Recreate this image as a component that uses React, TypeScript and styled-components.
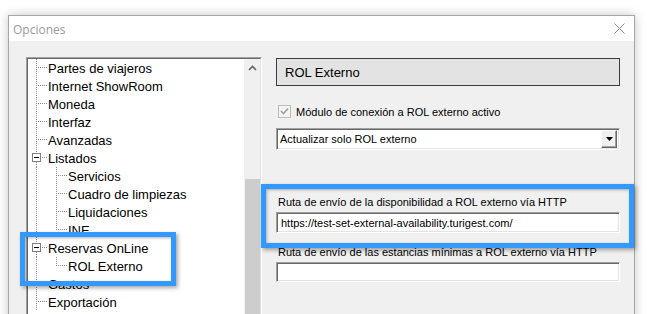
import styled, { createGlobalStyle } from 'styled-components';

const GlobalStyle = createGlobalStyle`
  html, body {
    margin: 0;
    padding: 0;
    background: #ffffff;
    overflow: hidden;
  }
  body {
    font-family: 'Liberation Sans', Arial, sans-serif;
  }
`;

type TreeItem = {
  label: string;
  level: 1 | 2;
  expander?: boolean;
  lastChild?: boolean;
};

const TREE: TreeItem[] = [
  { label: 'Partes de viajeros', level: 1 },
  { label: 'Internet ShowRoom', level: 1 },
  { label: 'Moneda', level: 1 },
  { label: 'Interfaz', level: 1 },
  { label: 'Avanzadas', level: 1 },
  { label: 'Listados', level: 1, expander: true },
  { label: 'Servicios', level: 2 },
  { label: 'Cuadro de limpiezas', level: 2 },
  { label: 'Liquidaciones', level: 2 },
  { label: 'INE', level: 2, lastChild: true },
  { label: 'Reservas OnLine', level: 1, expander: true },
  { label: 'ROL Externo', level: 2, lastChild: true },
  { label: 'Gastos', level: 1 },
  { label: 'Exportación', level: 1 },
];

// Dotted guide lines of the tree, one small drawing per row
function Guides({ item }: { item: TreeItem }) {
  const dot = { stroke: '#8a8a8a', strokeWidth: 1, strokeDasharray: '1 1', shapeRendering: 'crispEdges' as const };
  const width = item.level === 1 ? 20 : 40;
  return (
    <svg width={width} height={18} viewBox={`0 0 ${width} 18`}>
      {item.expander ? (
        <>
          <line x1={8.5} y1={0} x2={8.5} y2={4} {...dot} />
          <line x1={8.5} y1={13} x2={8.5} y2={18} {...dot} />
          <rect x={4.5} y={4.5} width={8} height={8} fill="#fff" stroke="#7f7f7f" shapeRendering="crispEdges" />
          <line x1={6} y1={8.5} x2={11} y2={8.5} stroke="#000" shapeRendering="crispEdges" />
          <line x1={14} y1={8.5} x2={19} y2={8.5} {...dot} />
        </>
      ) : (
        <>
          <line x1={8.5} y1={0} x2={8.5} y2={18} {...dot} />
          {item.level === 1 && <line x1={10} y1={8.5} x2={19} y2={8.5} {...dot} />}
        </>
      )}
      {item.level === 2 && (
        <>
          <line x1={28.5} y1={0} x2={28.5} y2={item.lastChild ? 9 : 18} {...dot} />
          <line x1={30} y1={8.5} x2={39} y2={8.5} {...dot} />
        </>
      )}
    </svg>
  );
}

export default function App() {
  return (
    <Page>
      <GlobalStyle />
      <Window>
        <TitleBar>
          <span>Opciones</span>
          <svg width="11" height="11" viewBox="0 0 11 11">
            <path d="M0.5 0.5 L10.5 10.5 M10.5 0.5 L0.5 10.5" stroke="#8c8c8c" strokeWidth="1" />
          </svg>
        </TitleBar>
        <Body>
          <TreeFrame>
            <TreeInner>
              <TreeList>
                {TREE.map((item, index) => (
                  <TreeRow key={index}>
                    <Guides item={item} />
                    <span>{item.label}</span>
                  </TreeRow>
                ))}
              </TreeList>
              <ScrollBar>
                <ScrollArrow>
                  <svg width="9" height="6" viewBox="0 0 9 6">
                    <path d="M1 5 L4.5 1.5 L8 5" stroke="#606060" strokeWidth="1.6" fill="none" />
                  </svg>
                </ScrollArrow>
                <ScrollThumb />
              </ScrollBar>
            </TreeInner>
          </TreeFrame>

          <Panel>
            <PanelHeader>ROL Externo</PanelHeader>
            <CheckRow>
              <CheckBox>
                <svg width="9" height="9" viewBox="0 0 9 9">
                  <path d="M1 4 L3.5 6.5 L8 1.5" stroke="#a0a0a0" strokeWidth="1.6" fill="none" />
                </svg>
              </CheckBox>
              <span>Módulo de conexión a ROL externo activo</span>
            </CheckRow>
            <Select>
              <span>Actualizar solo ROL externo</span>
              <SelectButton>
                <svg width="7" height="4" viewBox="0 0 7 4">
                  <path d="M0 0 L7 0 L3.5 4 Z" fill="#000" />
                </svg>
              </SelectButton>
            </Select>
            <FieldLabel $top={46}>Ruta de envío de la disponibilidad a ROL externo vía HTTP</FieldLabel>
            <TextInput $height={21}>https://test-set-external-availability.turigest.com/</TextInput>
            <FieldLabel $top={13}>Ruta de envío de las estancias mínimas a ROL externo vía HTTP</FieldLabel>
            <TextInput $height={20} />
          </Panel>
        </Body>
      </Window>

      <Highlight $left={20} $top={232} $width={156} $height={54} />
      <Highlight $left={261} $top={184} $width={373} $height={64} />
    </Page>
  );
}

const Page = styled.div`
  position: relative;
  width: 647px;
  height: 314px;
  overflow: hidden;
  background: #ffffff;
`;

const Window = styled.div`
  margin: 15px 0 0 8px;
  width: 627px;
  height: 340px;
  display: flex;
  flex-direction: column;
  border: 1px solid #a6a6a6;
  box-sizing: border-box;
  box-shadow: 0 0 10px rgba(0, 0, 0, 0.22);
  background: #f0f0f0;
`;

const TitleBar = styled.div`
  display: flex;
  flex-shrink: 0;
  align-items: center;
  justify-content: space-between;
  height: 25px;
  padding: 0 9px 0 4px;
  background: #ffffff;
  font-family: 'Open Sans', 'Noto Sans', sans-serif;
  font-size: 12px;
  color: #9a9a9a;
  & > span {
    margin-top: 2px;
  }
`;

const Body = styled.div`
  display: flex;
  flex: 1;
  padding: 16px 0 0 17px;
  background: #f0f0f0;
`;

const TreeFrame = styled.div`
  width: 236px;
  height: 290px;
  flex-shrink: 0;
  box-sizing: border-box;
  border: 1px solid;
  border-color: #a0a0a0 #ffffff #ffffff #a0a0a0;
`;

const TreeInner = styled.div`
  display: flex;
  height: 100%;
  box-sizing: border-box;
  border: 1px solid;
  border-color: #696969 #e3e3e3 #e3e3e3 #696969;
  background: #ffffff;
`;

const TreeList = styled.div`
  flex: 1;
  display: flex;
  flex-direction: column;
  overflow: hidden;
`;

const TreeRow = styled.div`
  display: flex;
  align-items: center;
  height: 18px;
  flex-shrink: 0;
  font-size: 13px;
  color: #000000;
  white-space: nowrap;
  & > svg {
    flex-shrink: 0;
  }
`;

const ScrollBar = styled.div`
  display: flex;
  flex-direction: column;
  width: 16px;
  background: #f0f0f0;
`;

const ScrollArrow = styled.div`
  display: flex;
  align-items: center;
  justify-content: center;
  height: 17px;
`;

const ScrollThumb = styled.div`
  margin: 103px 0 0 1px;
  width: 15px;
  flex: 1;
  background: #cdcdcd;
`;

const Panel = styled.div`
  display: flex;
  flex-direction: column;
  width: 344px;
  margin-left: 14px;
  padding-top: 1px;
  font-size: 11px;
  color: #000000;
`;

const PanelHeader = styled.div`
  display: flex;
  align-items: center;
  height: 28px;
  box-sizing: border-box;
  padding-left: 8px;
  border: 1px solid #3c3c3c;
  background: #e3e3e3;
  font-size: 13px;
`;

const CheckRow = styled.div`
  display: flex;
  align-items: center;
  gap: 5px;
  margin: 19px 0 0 2px;
  height: 13px;
`;

const CheckBox = styled.div`
  display: flex;
  align-items: center;
  justify-content: center;
  width: 13px;
  height: 13px;
  box-sizing: border-box;
  border: 1px solid #bcbcbc;
  background: #f4f4f4;
`;

const sunken = `
  box-sizing: border-box;
  border: 1px solid;
  border-color: #a0a0a0 #ffffff #ffffff #a0a0a0;
  box-shadow: inset 1px 1px 0 #696969, inset -1px -1px 0 #e3e3e3;
  background: #ffffff;
`;

const Select = styled.div`
  ${sunken};
  display: flex;
  align-items: center;
  justify-content: space-between;
  height: 22px;
  margin-top: 10px;
  padding: 0 2px 0 3px;
  font-size: 11px;
`;

const SelectButton = styled.div`
  display: flex;
  align-items: center;
  justify-content: center;
  width: 16px;
  height: 18px;
  box-sizing: border-box;
  background: #f0f0f0;
  border: 1px solid;
  border-color: #ffffff #696969 #696969 #ffffff;
  box-shadow: inset -1px -1px 0 #a0a0a0;
`;

const FieldLabel = styled.div<{ $top: number }>`
  margin: ${({ $top }) => $top}px 0 0 2px;
  line-height: 13px;
  white-space: nowrap;
`;

const TextInput = styled.div<{ $height: number }>`
  ${sunken};
  display: flex;
  align-items: center;
  height: ${({ $height }) => $height}px;
  margin-top: 3px;
  padding-left: 4px;
  white-space: nowrap;
`;

// Blue annotation frames drawn over the dialog
const Highlight = styled.div<{ $left: number; $top: number; $width: number; $height: number }>`
  position: absolute;
  left: ${({ $left }) => $left}px;
  top: ${({ $top }) => $top}px;
  width: ${({ $width }) => $width}px;
  height: ${({ $height }) => $height}px;
  box-sizing: border-box;
  border: 5px solid #3399ff;
  box-shadow: 2px 2px 4px rgba(0, 0, 0, 0.35), inset 1px 1px 3px rgba(0, 0, 0, 0.3);
  pointer-events: none;
`;
